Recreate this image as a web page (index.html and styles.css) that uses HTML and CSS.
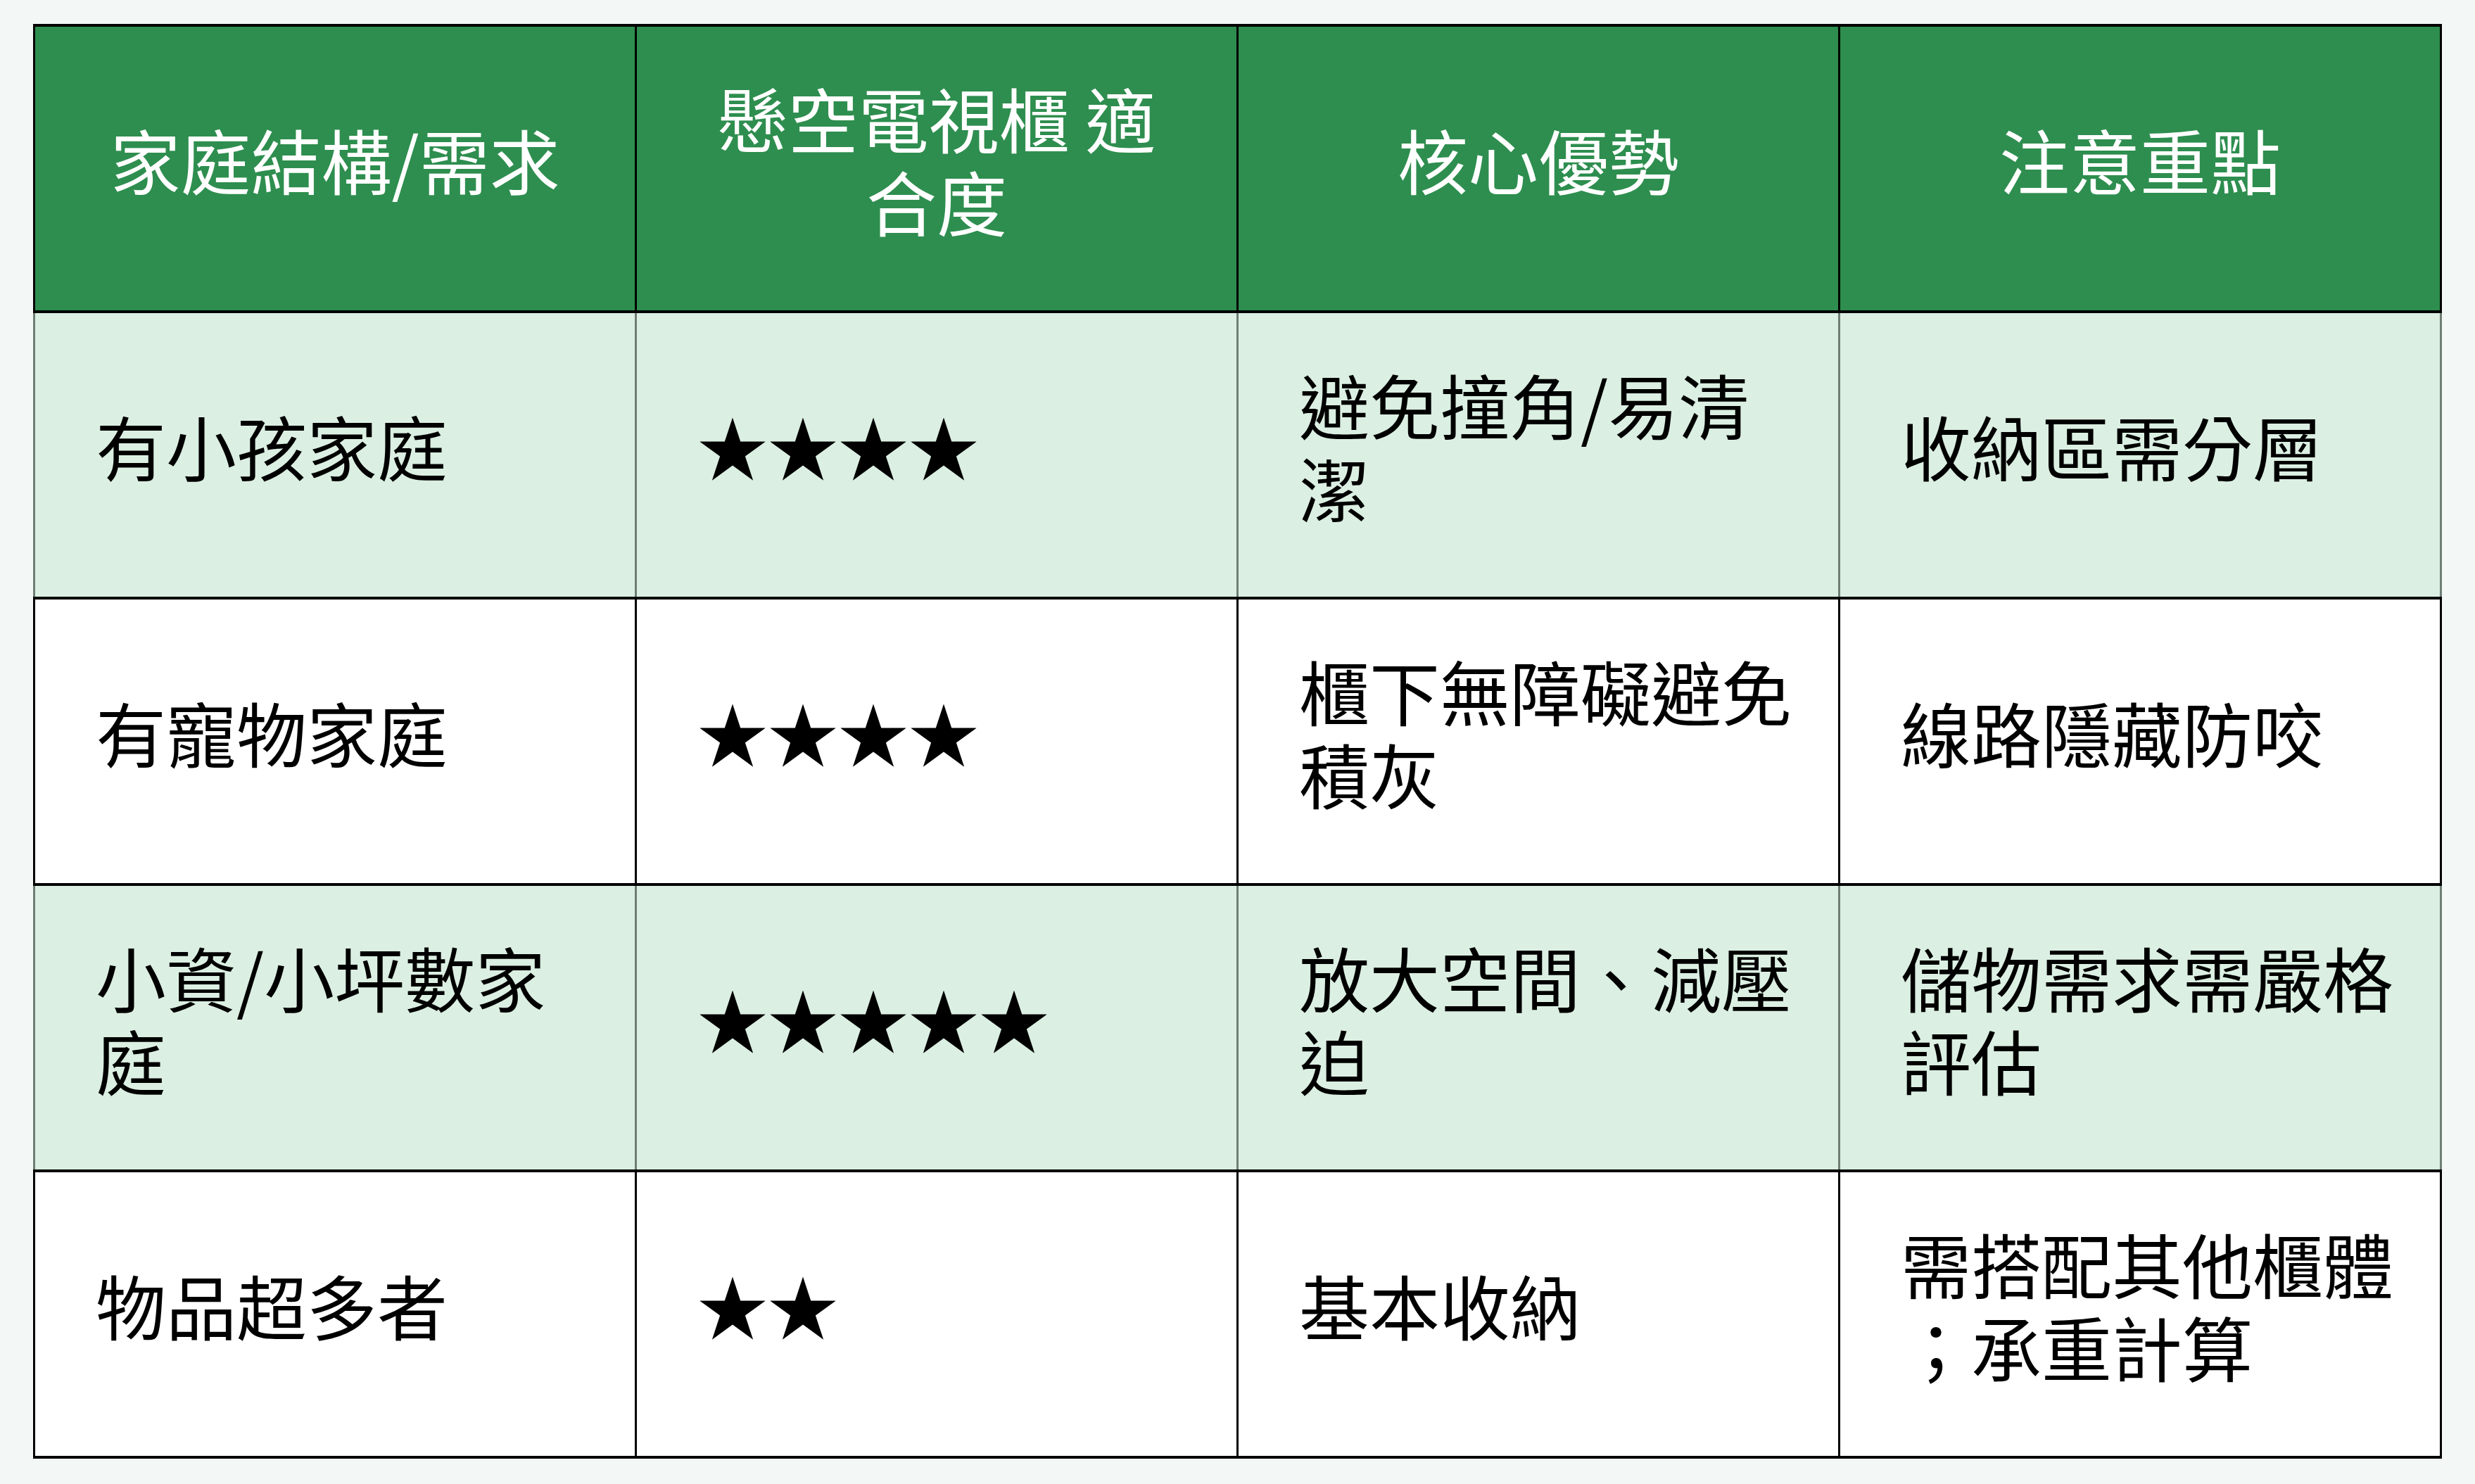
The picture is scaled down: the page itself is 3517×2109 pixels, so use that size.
FILE: index.html
```html
<!DOCTYPE html>
<html lang="zh-Hant">
<head>
<meta charset="utf-8">
<title>懸空電視櫃適合度</title>
<link rel="stylesheet" href="styles.css">
</head>
<body>
<main class="page">
  <table class="compare">
    <thead>
      <tr>
        <th>家庭結構/需求</th>
        <th>懸空電視櫃 適合度</th>
        <th>核心優勢</th>
        <th>注意重點</th>
      </tr>
    </thead>
    <tbody>
      <tr class="alt">
        <td>有小孩家庭</td>
        <td class="stars">★★★★</td>
        <td>避免撞角/易清潔</td>
        <td>收納區需分層</td>
      </tr>
      <tr>
        <td>有寵物家庭</td>
        <td class="stars">★★★★</td>
        <td>櫃下無障礙避免積灰</td>
        <td>線路隱藏防咬</td>
      </tr>
      <tr class="alt">
        <td>小資/小坪數家庭</td>
        <td class="stars">★★★★★</td>
        <td>放大空間、減壓迫</td>
        <td>儲物需求需嚴格評估</td>
      </tr>
      <tr>
        <td>物品超多者</td>
        <td class="stars">★★</td>
        <td>基本收納</td>
        <td>需搭配其他櫃體；承重計算</td>
      </tr>
    </tbody>
  </table>
</main>
</body>
</html>
```

FILE: styles.css
```css
html, body {
  margin: 0;
  padding: 0;
  background: #f3f7f5;
}

.page {
  padding: 34px 0 0 47px;
}

.compare {
  border-collapse: collapse;
  table-layout: fixed;
  width: 3423px;
  font-family: "Noto Sans CJK TC", "Noto Sans", sans-serif;
  font-size: 100px;
  line-height: 1.18;
}

.compare th,
.compare td {
  border-top: 4px solid #000;
  border-bottom: 4px solid #000;
  border-left: 3px solid #000;
  border-right: 3px solid #000;
  height: 407px;
  vertical-align: middle;
  box-sizing: border-box;
}

.compare th {
  background: #2e8e4f;
  color: #fff;
  font-weight: 400;
  text-align: center;
  padding: 0 86px 28px;
}

.compare td {
  background: #ffffff;
  color: #000;
  text-align: left;
  padding: 0 46px 28px 86px;
  line-break: anywhere;
}

.compare .alt td {
  background: #dbefe2;
  border-left-color: #6f7e74;
  border-right-color: #6f7e74;
}
```
